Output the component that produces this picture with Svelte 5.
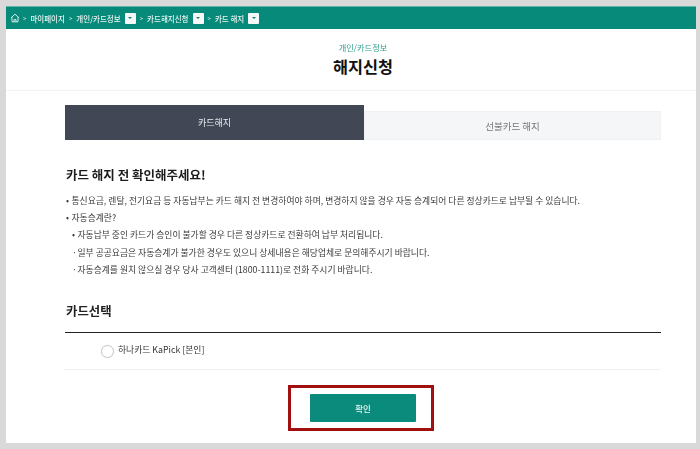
<script>
  const crumbs = ['개인/카드정보', '카드해지신청', '카드 해지'];
  const notes = [
    { mark: '•', text: '통신요금, 렌탈, 전기요금 등 자동납부는 카드 해지 전 변경하여야 하며, 변경하지 않을 경우 자동 승계되어 다른 정상카드로 납부될 수 있습니다.' },
    { mark: '•', text: '자동승계란?' },
    { mark: '•', sub: true, text: '자동납부 중인 카드가 승인이 불가할 경우 다른 정상카드로 전환하여 납부 처리됩니다.' },
    { mark: '·', sub: true, text: '일부 공공요금은 자동승계가 불가한 경우도 있으니 상세내용은 해당업체로 문의해주시기 바랍니다.' },
    { mark: '·', sub: true, text: '자동승계를 원치 않으실 경우 당사 고객센터 (1800-1111)로 전화 주시기 바랍니다.' }
  ];
</script>

<div class="page">
  <div class="frame">
    <nav class="crumbs">
      <svg class="home" width="10" height="10" viewBox="0 0 10 10" fill="none" stroke="#e6f4f1" stroke-width="0.9">
        <path d="M0.8 5 5 1.2 9.2 5" /><path d="M2 4.2V8.8H8V4.2" /><path d="M4 8.8V6.6H6V8.8" />
      </svg>
      <span class="sep">&gt;</span>
      <span class="crumb">마이페이지</span>
      {#each crumbs as c}
        <span class="sep">&gt;</span>
        <span class="crumb">{c}</span>
        <span class="drop"><i></i></span>
      {/each}
    </nav>

    <header class="head">
      <p class="eyebrow">개인/카드정보</p>
      <h1>해지신청</h1>
    </header>

    <main class="body">
      <div class="tabs">
        <div class="tab on">카드해지</div>
        <div class="tab off">선불카드 해지</div>
      </div>

      <h2>카드 해지 전 확인해주세요!</h2>
      <ul class="notes">
        {#each notes as n}
          <li class:sub={n.sub}><span class="mark">{n.mark}</span>{n.text}</li>
        {/each}
      </ul>

      <h3>카드선택</h3>
      <div class="option">
        <span class="radio"></span>
        <span class="label">하나카드 KaPick [본인]</span>
      </div>

      <div class="actions">
        <div class="highlight"><button>확인</button></div>
      </div>
    </main>
  </div>
</div>

<style>
  :global(body) { margin: 0; background: #d9d9d9; }
  .page {
    width: 700px; height: 449px; box-sizing: border-box; padding: 6px 4px 6px 6px;
    background: #d9d9d9; overflow: hidden;
    font-family: "Noto Sans CJK KR", "Liberation Sans", sans-serif; color: #222;
  }
  .frame { height: 437px; background: #fff; display: flex; flex-direction: column; }
  .crumbs {
    height: 23px; flex: none; box-sizing: border-box; padding: 0 0 0 4px; background: #078a7a;
    border-top: 1px solid #5fb5a9;
    display: flex; align-items: center; gap: 3px; color: #e8f5f2;
    font-size: 7.5px; font-weight: 500; filter: blur(0.3px);
  }
  .home { margin-right: -1px; }
  .sep { font-size: 6px; margin: 0 1px; color: #d5ece7; }
  .drop { width: 11px; height: 11px; background: #f6f8f8; border-radius: 1px; display: flex; align-items: center; justify-content: center; margin-left: 1px; }
  .drop i { width: 0; height: 0; border: 2px solid transparent; border-top: 2px solid #0a7b6d; border-bottom: 0; }
  .head {
    height: 62px; flex: none; box-sizing: border-box; padding: 13px 0 0 24px; text-align: center;
    border-bottom: 1px solid #f3f3f3;
  }
  .eyebrow { margin: 0; font-size: 8.2px; line-height: 11px; color: #2f9e8f; filter: blur(0.3px); }
  h1 { margin: 1px 0 0; font-size: 16.3px; line-height: 24px; font-weight: 700; color: #111; }
  .body { flex: 1; padding: 14px 35px 0 59px; filter: blur(0.35px); }
  .tabs { display: flex; align-items: flex-end; height: 35px; }
  .tab { display: flex; align-items: center; justify-content: center; box-sizing: border-box; }
  .on { width: 299px; height: 35px; background: #414754; color: #eceef0; font-size: 9px; }
  .off { width: 297px; height: 29px; background: #f5f6f7; color: #777; font-size: 9.5px; border: 1px solid #f0f1f2; }
  h2 { margin: 26px 0 0 1px; height: 17px; font-size: 12.5px; line-height: 17px; font-weight: 700; color: #1c1c1c; }
  .notes { list-style: none; margin: 8.5px 0 0; padding: 0 0 0 1px; font-size: 8.8px; color: #3a3a3a; }
  .notes li { height: 17.4px; line-height: 17.4px; white-space: nowrap; }
  .notes .sub { padding-left: 6px; }
  .mark { display: inline-block; width: 5.5px; }
  h3 { margin: 24.5px 0 0; padding: 0 0 12px 1px; height: 17px; font-size: 12.4px; line-height: 17px; font-weight: 700; color: #222; border-bottom: 1px solid #222; box-sizing: content-box; }
  .option { height: 37px; margin-left: -1px; padding-left: 37px; box-sizing: border-box; display: flex; align-items: center; gap: 4px; border-bottom: 1px solid #f1f1f1; }
  .radio { width: 11px; height: 11px; border: 1px solid #c9c9c9; border-radius: 50%; background: #fff; margin-top: 2px; box-shadow: 0 0 1px #ddd; }
  .label { font-size: 8.8px; color: #333; margin-top: -2px; }
  .actions { display: flex; justify-content: center; margin-top: 15px; padding-right: 4px; }
  .highlight { border: 3px solid #a20f10; box-sizing: border-box; width: 146px; height: 46px; padding: 6px 0 0 19px; }
  button {
    display: block; width: 106px; height: 28px; border: 0; border-radius: 1px; background: #0b8b7b;
    color: #e8f5f2; font: 500 8.5px "Noto Sans CJK KR", sans-serif; padding: 0;
  }
</style>
